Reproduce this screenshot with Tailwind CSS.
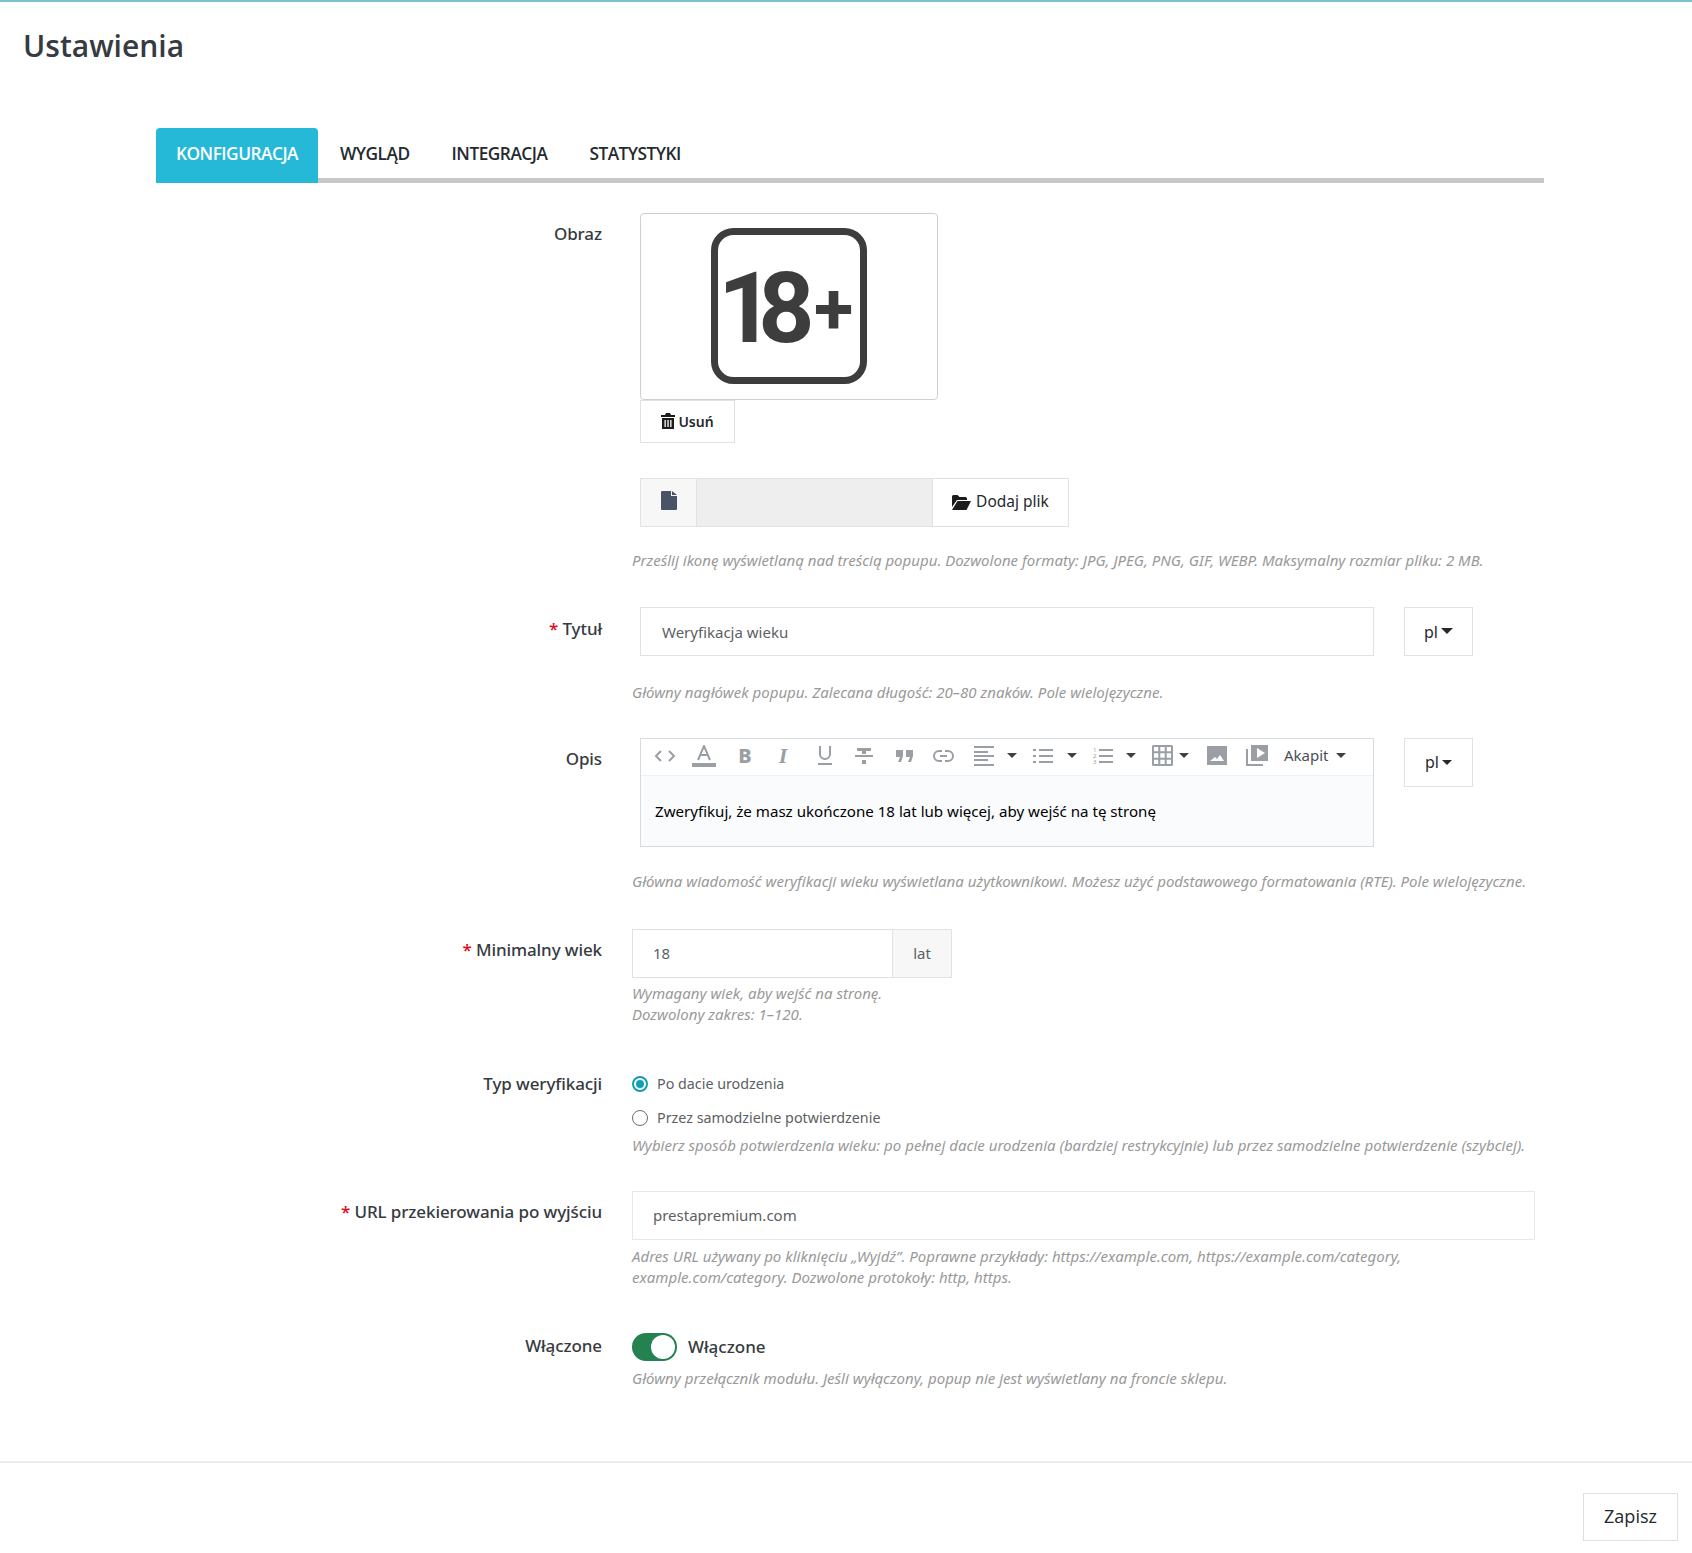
<!DOCTYPE html>
<html lang="pl">
<head>
    <meta charset="UTF-8">
    <title>Ustawienia</title>
    <script src="https://cdn.jsdelivr.net/npm/@tailwindcss/browser@4"></script>
</head>
<body class="bg-white font-['Noto_Sans',sans-serif] text-[#363a41]">
    <div class="h-[1.5px] bg-[#7cc3d1]"></div>

    <h1 class="pl-[23px] pt-[25px] font-['Open_Sans',sans-serif] text-[30px] leading-[38px] font-semibold text-[#363a41]">Ustawienia</h1>

    <!-- Tabs -->
    <div class="mx-[156px] mt-[63px] flex h-[55px] w-[1388px] items-stretch border-b-[5px] border-[#c8c8c8] pt-[2px] font-['Open_Sans',sans-serif] text-[17.300px] font-semibold tracking-[-0.5px] text-[#25292e]">
        <div class="-mb-[5px] -mt-[2px] mr-px flex w-[162px] items-center justify-center rounded-t-[4px] bg-[#25b9d7] pb-[3px] text-white">KONFIGURACJA</div>
        <div class="flex items-center px-[21px]">WYGLĄD</div>
        <div class="flex items-center px-[21px]">INTEGRACJA</div>
        <div class="flex items-center px-[21px]">STATYSTYKI</div>
    </div>

    <!-- Obraz -->
    <div class="mt-[30px] flex">
        <label class="w-[602px] pt-[8px] text-right text-[17px] font-medium tracking-[-0.1px]">Obraz</label>
        <div class="ml-[30px] w-[903px]">
            <div class="ml-[8px] flex h-[187px] w-[298px] items-center justify-center rounded-[4px] border border-[#cfcfcf]">
                <svg width="156" height="156" viewBox="0 0 156 156">
                    <rect x="3.500" y="3.500" width="149" height="149" rx="19" fill="none" stroke="#3d3d3d" stroke-width="7"/>
                    <text x="7" y="114" font-family="Roboto" font-weight="700" font-size="98" letter-spacing="-16" fill="#3d3d3d">18</text>
                    <text x="103" y="106" font-family="Roboto" font-weight="700" font-size="72" fill="#3d3d3d">+</text>
                </svg>
            </div>
            <button class="ml-[8px] flex h-[43px] w-[95px] items-center justify-center gap-[3px] border border-[#e2e2e2] text-[14px] font-semibold text-[#25292e]">
                <svg width="14" height="16" viewBox="0 0 14 16" fill="#1c1c1c"><path d="M5 0h4l1 2h4v2H0V2h4zM1 5h12v11H1zm2.500 2v7h1.300V7zm2.900 0v7h1.300V7zm2.800 0v7h1.300V7z" fill-rule="evenodd"/></svg>
                Usuń
            </button>
            <div class="ml-[8px] mt-[35px] flex h-[49px] w-[429px] border border-[#e2e2e2]">
                <div class="flex w-[56px] justify-center border-r border-[#e2e2e2] bg-[#f7f7f7] pt-[12px]">
                    <svg width="16" height="19" viewBox="0 0 16 19" fill="#4a5266"><path d="M0 1a1 1 0 0 1 1-1h9v5h6v13a1 1 0 0 1-1 1H1a1 1 0 0 1-1-1zM11 0l5 4h-5z"/></svg>
                </div>
                <div class="w-[235px] bg-[#eeeeee]"></div>
                <div class="flex flex-1 items-center justify-center gap-[5px] border-l border-[#e2e2e2] text-[15.500px] text-[#25292e]">
                    <svg width="19" height="15" viewBox="0 0 19 15" fill="#1c1c1c"><path d="M0 1.500A1.500 1.500 0 0 1 1.500 0h4l2 2h6A1.500 1.500 0 0 1 15 3.500V5H5L0 12zM5.500 6H19l-4.500 9H0z"/></svg>
                    Dodaj plik
                </div>
            </div>
            <p class="mt-[23px] text-[15px] italic leading-[20px] tracking-[0.02px] text-[#999999]">Prześlij ikonę wyświetlaną nad treścią popupu. Dozwolone formaty: JPG, JPEG, PNG, GIF, WEBP. Maksymalny rozmiar pliku: 2 MB.</p>
        </div>
    </div>

    <!-- Tytul -->
    <div class="mt-[37px] flex">
        <label class="w-[602px] pt-[9px] text-right text-[17px] font-medium tracking-[-0.1px]"><span class="text-[#e30613]">*</span> Tytuł</label>
        <div class="ml-[30px] w-[903px]">
            <div class="flex">
                <div class="ml-[8px] flex h-[49px] w-[734px] items-center border border-[#e2e2e2] pl-[21px] pt-[2px] text-[15px] text-[#5c5f64]">Weryfikacja wieku</div>
                <div class="ml-[30px] flex h-[49px] w-[69px] items-center justify-center gap-[3px] border border-[#e2e2e2] pt-[2px] text-[16px] text-[#25292e]">pl <span class="-mt-[2px] h-0 w-0 border-x-[6px] border-t-[6px] border-x-transparent border-t-[#25292e]"></span></div>
            </div>
            <p class="mt-[26px] text-[15px] italic leading-[20px] tracking-[0.02px] text-[#999999]">Główny nagłówek popupu. Zalecana długość: 20–80 znaków. Pole wielojęzyczne.</p>
        </div>
    </div>

    <!-- Opis -->
    <div class="mt-[36px] flex">
        <label class="w-[602px] pt-[8px] text-right text-[17px] font-medium tracking-[-0.1px]">Opis</label>
        <div class="ml-[30px] w-[903px]">
            <div class="flex">
                <div class="ml-[8px] h-[109px] w-[734px] border border-[#d5dbe1] bg-[#f9fbfd]">
                    <div class="flex h-[37px] items-center border-b border-[#eef1f4] bg-white pb-[2px] pl-[13px] text-[15px] text-[#4b4f55]">
                        <svg class="mr-[16px]" width="22" height="14" viewBox="0 0 22 14" fill="none" stroke="#9a9ea5" stroke-width="2"><path d="M7 2 2 7l5 5M15 2l5 5-5 5"/></svg>
                        <svg class="mr-[22px]" width="24" height="22" viewBox="0 0 24 22" fill="none"><path d="M6 15 12 1l6 14M8 10h8" stroke="#9a9ea5" stroke-width="2"/><rect y="18" width="24" height="4" fill="#9a9ea5"/></svg>
                        <span class="mr-[24px] w-[14px] text-center text-[20px] font-extrabold leading-none text-[#9a9ea5]">B</span>
                        <span class="mr-[27px] w-[14px] text-center font-['Liberation_Serif',serif] text-[22px] font-bold italic leading-none text-[#9a9ea5]">I</span>
                        <svg class="mr-[22px]" width="16" height="19" viewBox="0 0 16 19" fill="none" stroke="#9a9ea5" stroke-width="2"><path d="M3 0v8a5 5 0 0 0 10 0V0M1 18h14"/></svg>
                        <svg class="mr-[23px]" width="18" height="16" viewBox="0 0 18 16" fill="#9a9ea5"><path d="M2 0h14v3h-5v3H7V3H2zM0 7h18v2H0zM7 12h4v4H7z"/></svg>
                        <svg class="mr-[20px]" width="17" height="12" viewBox="0 0 17 12" fill="#9a9ea5"><path d="M0 0h7v6l-2 6H2l2-5H0zM10 0h7v6l-2 6h-3l2-5h-4z"/></svg>
                        <svg class="mr-[20px]" width="21" height="12" viewBox="0 0 21 12" fill="none" stroke="#9a9ea5" stroke-width="2"><path d="M9 1H6a5 5 0 0 0 0 10h3M12 1h3a5 5 0 0 1 0 10h-3M7 6h7"/></svg>
                        <svg class="mr-[13px]" width="20" height="20" viewBox="0 0 20 20" fill="#9a9ea5"><path d="M0 0h20v2H0zM0 5h14v2H0zM0 9h20v2H0zM0 13h14v2H0zM0 18h20v2H0z"/></svg>
                        <span class="mr-[16px] h-0 w-0 border-x-[5px] border-t-[5px] border-x-transparent border-t-[#3f4145]"></span>
                        <svg class="mr-[14px]" width="20" height="14" viewBox="0 0 20 14" fill="#9a9ea5"><path d="M0 0h3v2H0zM6 0h14v2H6zM0 6h3v2H0zM6 6h14v2H6zM0 12h3v2H0zM6 12h14v2H6z"/></svg>
                        <span class="mr-[16px] h-0 w-0 border-x-[5px] border-t-[5px] border-x-transparent border-t-[#3f4145]"></span>
                        <svg class="mr-[13px]" width="20" height="21" viewBox="0 0 20 21" fill="#9a9ea5"><text x="0" y="7" font-family="Noto Sans" font-size="6">1</text><text x="0" y="13" font-family="Noto Sans" font-size="6">2</text><text x="0" y="19" font-family="Noto Sans" font-size="6">3</text><path d="M6 4h14v2H6zM6 10h14v2H6zM6 16h14v2H6z"/></svg>
                        <span class="mr-[16px] h-0 w-0 border-x-[5px] border-t-[5px] border-x-transparent border-t-[#3f4145]"></span>
                        <svg class="mr-[6px]" width="21" height="21" viewBox="0 0 21 21" fill="none" stroke="#9a9ea5" stroke-width="2"><path d="M1.500 1h18a.500.500 0 0 1 .500.500v18a.500.500 0 0 1-.500.500h-18a.500.500 0 0 1-.500-.500v-18A.500.500 0 0 1 1.500 1zM7.300 1v19M13.700 1v19M1 7.300h19M1 13.700h19"/></svg>
                        <span class="mr-[18px] h-0 w-0 border-x-[5px] border-t-[5px] border-x-transparent border-t-[#3f4145]"></span>
                        <svg class="mr-[19px]" width="20" height="19" viewBox="0 0 20 19" fill="#9a9ea5"><path d="M0 0h20v19H0zM3 15h14l-4-6-3 4-2-2z" fill-rule="evenodd"/></svg>
                        <svg class="mr-[16px]" width="22" height="21" viewBox="0 0 22 21" fill="#9a9ea5"><path d="M5 0h17v16H5zM11 3v10l8-5z" fill-rule="evenodd"/><path d="M0 4h2v15h15v2H0z"/></svg>
                        <span class="text-[15px]">Akapit</span>
                        <span class="ml-[7px] h-0 w-0 border-x-[5px] border-t-[5px] border-x-transparent border-t-[#3f4145]"></span>
                    </div>
                    <div class="pl-[14px] pt-[25px] text-[15.100px] leading-[20px] text-black">Zweryfikuj, że masz ukończone 18 lat lub więcej, aby wejść na tę stronę</div>
                </div>
                <div class="ml-[30px] flex h-[49px] w-[69px] items-center justify-center gap-[3px] border border-[#e2e2e2] text-[16px] text-[#25292e]">pl <span class="h-0 w-0 border-x-[5px] border-t-[5px] border-x-transparent border-t-[#25292e]"></span></div>
            </div>
            <p class="mt-[24px] text-[15px] italic leading-[20px] tracking-[0.02px] text-[#999999]">Główna wiadomość weryfikacji wieku wyświetlana użytkownikowi. Możesz użyć podstawowego formatowania (RTE). Pole wielojęzyczne.</p>
        </div>
    </div>

    <!-- Minimalny wiek -->
    <div class="mt-[38px] flex">
        <label class="w-[602px] pt-[8px] text-right text-[17px] font-medium tracking-[-0.1px]"><span class="text-[#e30613]">*</span> Minimalny wiek</label>
        <div class="ml-[30px] w-[903px]">
            <div class="flex h-[49px] w-[320px] border border-[#e2e2e2] text-[15px] text-[#5c5f64]">
                <div class="flex w-[259px] items-center pl-[20px]">18</div>
                <div class="flex flex-1 items-center justify-center border-l border-[#e2e2e2] bg-[#f7f7f7]">lat</div>
            </div>
            <p class="mt-[5px] text-[15px] italic leading-[21px] tracking-[0.02px] text-[#999999]">Wymagany wiek, aby wejść na stronę.<br>Dozwolony zakres: 1–120.</p>
        </div>
    </div>

    <!-- Typ weryfikacji -->
    <div class="mt-[48px] flex">
        <label class="-mt-[2px] w-[602px] text-right text-[17px] font-medium tracking-[-0.1px]">Typ weryfikacji</label>
        <div class="ml-[30px] w-[903px] pt-[1px] text-[14.300px] text-[#5c5f64]">
            <div class="flex h-[20px] items-center gap-[9px]">
                <span class="flex h-[16px] w-[16px] items-center justify-center rounded-full border-2 border-[#11a0b5]"><span class="h-[8px] w-[8px] rounded-full bg-[#11a0b5]"></span></span>
                Po dacie urodzenia
            </div>
            <div class="mt-[14px] flex h-[20px] items-center gap-[9px]">
                <span class="h-[16px] w-[16px] rounded-full border border-[#6c6c6c]"></span>
                Przez samodzielne potwierdzenie
            </div>
            <p class="mt-[7px] text-[15px] italic leading-[20px] tracking-[0.02px] text-[#999999]">Wybierz sposób potwierdzenia wieku: po pełnej dacie urodzenia (bardziej restrykcyjnie) lub przez samodzielne potwierdzenie (szybciej).</p>
        </div>
    </div>

    <!-- URL -->
    <div class="mt-[36px] flex">
        <label class="w-[602px] pt-[8px] text-right text-[17px] font-medium tracking-[-0.1px]"><span class="text-[#e30613]">*</span> URL przekierowania po wyjściu</label>
        <div class="ml-[30px] w-[903px]">
            <div class="flex h-[49px] w-[903px] items-center border border-[#e8e8e8] pl-[20px] text-[15px] text-[#5c5f64]">prestapremium.com</div>
            <p class="mt-[6px] w-[800px] text-[15px] italic leading-[21.500px] tracking-[0.02px] text-[#999999]">Adres URL używany po kliknięciu „Wyjdź”. Poprawne przykłady: https://example.com, https://example.com/category, example.com/category. Dozwolone protokoły: http, https.</p>
        </div>
    </div>

    <!-- Wlaczone -->
    <div class="mt-[44px] flex">
        <label class="w-[602px] text-right text-[17px] font-medium tracking-[-0.1px]">Włączone</label>
        <div class="ml-[30px] w-[903px]">
            <div class="flex items-center gap-[11px]">
                <span class="flex h-[28px] w-[45px] items-center justify-end rounded-full bg-[#23824f] pr-[2px]"><span class="h-[24px] w-[24px] rounded-full bg-white"></span></span>
                <span class="text-[17px] font-medium">Włączone</span>
            </div>
            <p class="mt-[7px] text-[15px] italic leading-[20px] tracking-[0.02px] text-[#999999]">Główny przełącznik modułu. Jeśli wyłączony, popup nie jest wyświetlany na froncie sklepu.</p>
        </div>
    </div>

    <!-- Footer -->
    <div class="mt-[73px] flex justify-end border-t-2 border-[#ececec] pr-[14px] pt-[30px]">
        <button class="h-[48px] w-[95px] border border-[#dfdfdf] font-['Open_Sans',sans-serif] text-[18px] font-medium text-[#25292e]">Zapisz</button>
    </div>
</body>
</html>
